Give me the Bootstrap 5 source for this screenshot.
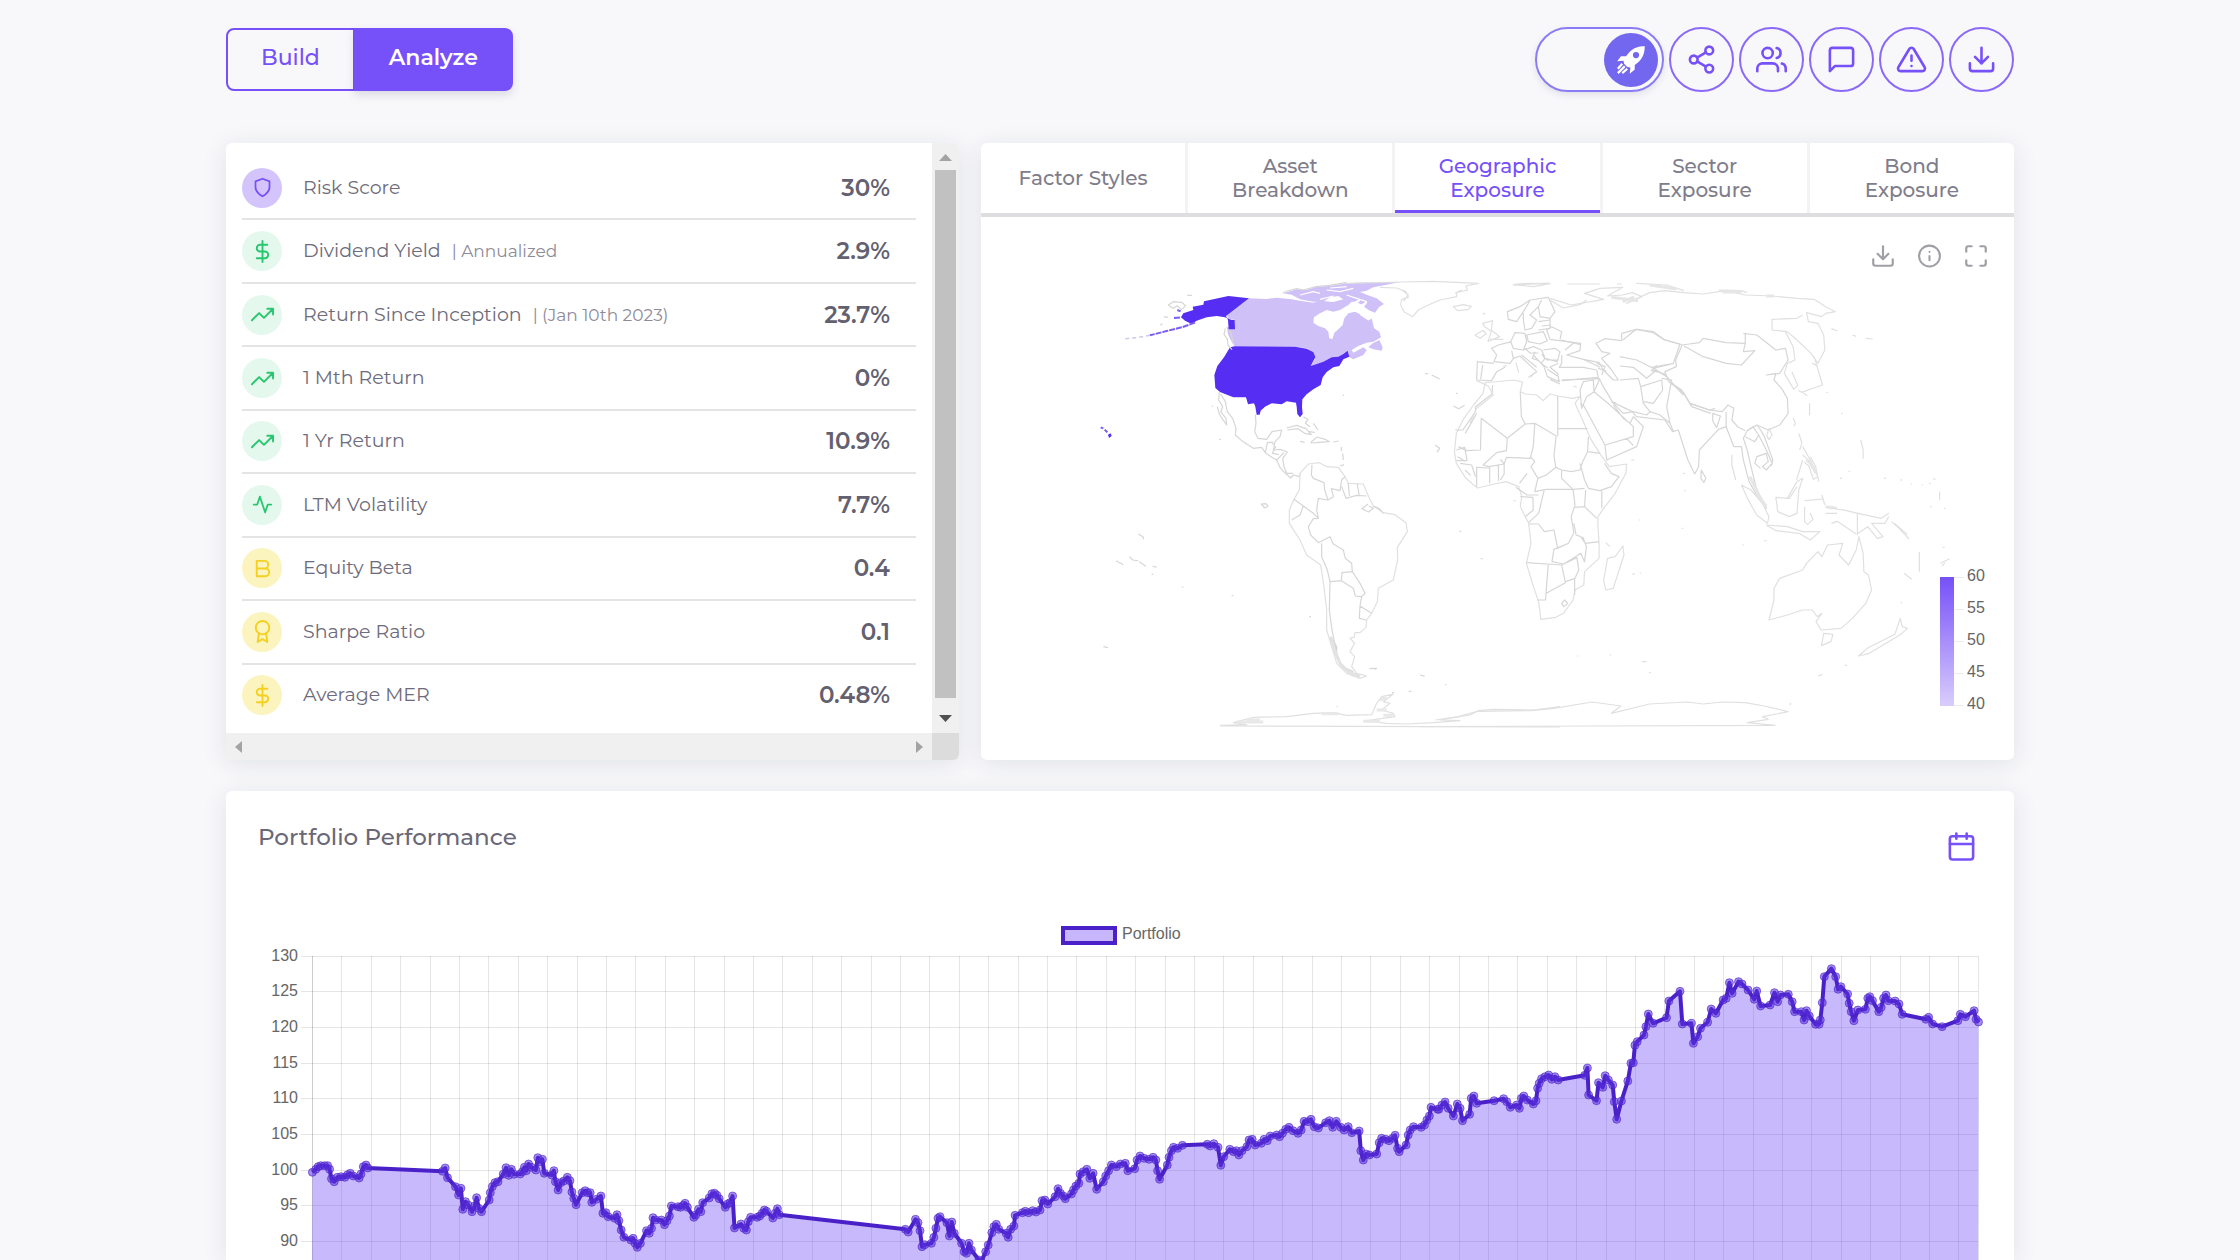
<!DOCTYPE html>
<html lang="en">
<head>
<meta charset="utf-8">
<meta name="viewport" content="width=device-width, initial-scale=1">
<title>Portfolio Analysis</title>
<link href="https://cdn.jsdelivr.net/npm/bootstrap@5.3.0/dist/css/bootstrap.min.css" rel="stylesheet">
<style>
:root{--violet:#7650f8;--ink:#6e6b7b}
body{background:#f8f8fb;color:var(--ink);font-family:Montserrat,Inter,"Open Sans",sans-serif;font-size:19px;line-height:24px}
.shell{max-width:1788px}
.topbar{padding:27px 0 51px}
.actions{gap:5px}
.ico{fill:none;stroke:currentColor;stroke-width:2;stroke-linecap:round;stroke-linejoin:round;display:block}
.mode .btn{font-size:22px;font-weight:500;line-height:24px;height:63px;padding:0 33px 4px;border:2px solid var(--violet);border-radius:8px;color:var(--violet)}
.mode .btn.active{background:var(--violet);color:#fff;font-weight:600;box-shadow:0 4px 8px rgba(60,50,90,.15)}
.round{width:65px;height:65px;border:2px solid #8a69f9;color:var(--violet);background:transparent;padding:0}
.rocket-switch{width:129px;height:65px;border:2px solid #8a7bf6;background:transparent;padding:0 4px;box-shadow:0 3px 6px rgba(60,50,90,.12)}
.knob{width:54px;height:54px;background:#7367f0}
.panels{display:grid;grid-template-columns:733fr 1033fr;gap:22px}
.panel{background:#fff;border-radius:6px;box-shadow:0 4px 24px rgba(34,41,47,.1)}
.stats-grid{display:grid;grid-template-columns:1fr 27px;grid-template-rows:1fr 27px;overflow:hidden}
.stats{padding:14px 16px 7px}
.stat{border-bottom:2px solid #e4e4e6;padding:0 26px 0 0;min-height:56px}
.stat:last-child{border-bottom:0}
.bubble{width:40px;height:40px;margin-right:21px}
.violet{background:#d3c5fb;color:#7650f8}
.green{background:#e5f8ee;color:#28c76f}
.gold{background:#fbf4bf;color:#f5d022}
.hint{font-size:17px;color:#8e8b98;margin-left:11px}
.amount{font-size:23px;font-weight:600;color:#63606f}
.bar-v,.bar-h{background:#f0f0f0}
.bar-v .thumb{background:#c1c1c1;margin:0 3px}
.corner{background:#dcdcdc}
.tabs{border-bottom:4px solid #dedee0}
.tabs .tab{flex:1 1 0;height:70px;padding:0 30px;border:0;border-right:3px solid #f3f3f5;background:none;color:#807d8b;font-size:20px;font-weight:500;line-height:24px}
.tabs .tab:last-child{border-right:0}
.tabs .tab.active{color:var(--violet);box-shadow:inset 0 -3px var(--violet)}
.tools{right:25px;top:26px;gap:21px;color:#a09fa6}
.plain{border:0;background:none;padding:0;color:inherit}
.perf{margin-top:31px}
.perf-head{padding:32px 37px 0 32px}
.perf-head h2{font-size:23px;line-height:28px;font-weight:500;color:#6a6777}
.perf-head .plain{color:var(--violet);margin-top:8px}
.canvas-text{font:16px "Liberation Sans",Arial,sans-serif;fill:#666}
#world path,#world circle{vector-effect:non-scaling-stroke}
.land{fill:none;stroke:#d6d6d6;stroke-width:1.2;stroke-linejoin:round}
.coast{stroke:#e0e0e0}
.us{fill:#562df3}
.ca{fill:#cfc1f8}
</style>
<script src="https://cdn.jsdelivr.net/npm/bootstrap@5.3.0/dist/js/bootstrap.bundle.min.js"></script>
</head>
<body>
<main class="shell vh-100 mx-auto d-flex flex-column">
  <header class="topbar d-flex justify-content-between align-items-center">
    <div class="btn-group mode" role="group" aria-label="Mode">
      <button type="button" class="btn">Build</button>
      <button type="button" class="btn active">Analyze</button>
    </div>
    <div class="actions d-flex">
      <button type="button" role="switch" aria-checked="true" aria-label="Boost" class="rocket-switch rounded-pill d-flex align-items-center justify-content-end">
        <span class="knob rounded-circle d-flex align-items-center justify-content-center">
          <svg width="30" height="30" viewBox="0 0 24 24" fill="#fff"><path fill-rule="evenodd" d="M23 1C18 1 13.500 2.500 10.500 6L8 9 4 9 1 13 6 12.500 6.500 15 9 17.500 11.500 18 11 23 15 19.500 15 16 18 13.500C21.500 10.500 23 6 23 1ZM16 5.500a2.500 2.500 0 1 1 0 5 2.500 2.500 0 0 1 0-5Z"/><path d="M1.500 19L5 15M1.500 22.500L7 17M5 22.500L9 19" stroke="#fff" stroke-width="1.800"/></svg>
        </span>
      </button>
      <button type="button" aria-label="Share" class="round rounded-circle d-flex align-items-center justify-content-center"><svg class="ico" width="31" height="31" viewBox="0 0 24 24"><circle cx="18" cy="5" r="3"/><circle cx="6" cy="12" r="3"/><circle cx="18" cy="19" r="3"/><path d="M8.590 13.510l6.830 3.980M15.410 6.510l-6.820 3.980"/></svg></button>
      <button type="button" aria-label="Users" class="round rounded-circle d-flex align-items-center justify-content-center"><svg class="ico" width="31" height="31" viewBox="0 0 24 24"><path d="M17 21v-2a4 4 0 0 0-4-4H5a4 4 0 0 0-4 4v2"/><circle cx="9" cy="7" r="4"/><path d="M23 21v-2a4 4 0 0 0-3-3.870M16 3.130a4 4 0 0 1 0 7.750"/></svg></button>
      <button type="button" aria-label="Comments" class="round rounded-circle d-flex align-items-center justify-content-center"><svg class="ico" width="31" height="31" viewBox="0 0 24 24"><path d="M21 15a2 2 0 0 1-2 2H7l-4 4V5a2 2 0 0 1 2-2h14a2 2 0 0 1 2 2z"/></svg></button>
      <button type="button" aria-label="Alerts" class="round rounded-circle d-flex align-items-center justify-content-center"><svg class="ico" width="31" height="31" viewBox="0 0 24 24"><path d="M10.290 3.860L1.820 18a2 2 0 0 0 1.710 3h16.940a2 2 0 0 0 1.710-3L13.710 3.860a2 2 0 0 0-3.420 0zM12 9v4M12 17h.01"/></svg></button>
      <button type="button" aria-label="Download" class="round rounded-circle d-flex align-items-center justify-content-center"><svg class="ico" width="31" height="31" viewBox="0 0 24 24"><path d="M21 15v4a2 2 0 0 1-2 2H5a2 2 0 0 1-2-2v-4M7 10l5 5 5-5M12 15V3"/></svg></button>
    </div>
  </header>

  <div class="panels">
    <section class="panel stats-grid">
      <ul class="stats list-unstyled mb-0 d-flex flex-column">
        <li class="stat flex-fill d-flex align-items-center"><span class="bubble violet rounded-circle d-flex align-items-center justify-content-center"><svg class="ico" width="21" height="21" viewBox="0 0 24 24"><path d="M12 22s8-4 8-10V5l-8-3-8 3v7c0 6 8 10 8 10z"/></svg></span><span>Risk Score</span><span class="amount ms-auto">30%</span></li>
        <li class="stat flex-fill d-flex align-items-center"><span class="bubble green rounded-circle d-flex align-items-center justify-content-center"><svg class="ico" width="23" height="23" viewBox="0 0 24 24"><path d="M12 1v22M17 5H9.500a3.500 3.500 0 0 0 0 7h5a3.500 3.500 0 0 1 0 7H6"/></svg></span><span>Dividend Yield</span><span class="hint">| Annualized</span><span class="amount ms-auto">2.9%</span></li>
        <li class="stat flex-fill d-flex align-items-center"><span class="bubble green rounded-circle d-flex align-items-center justify-content-center"><svg class="ico" width="23" height="23" viewBox="0 0 24 24"><path d="M23 6l-9.500 9.500-5-5L1 18M17 6h6v6"/></svg></span><span>Return Since Inception</span><span class="hint">| (Jan 10th 2023)</span><span class="amount ms-auto">23.7%</span></li>
        <li class="stat flex-fill d-flex align-items-center"><span class="bubble green rounded-circle d-flex align-items-center justify-content-center"><svg class="ico" width="23" height="23" viewBox="0 0 24 24"><path d="M23 6l-9.500 9.500-5-5L1 18M17 6h6v6"/></svg></span><span>1 Mth Return</span><span class="amount ms-auto">0%</span></li>
        <li class="stat flex-fill d-flex align-items-center"><span class="bubble green rounded-circle d-flex align-items-center justify-content-center"><svg class="ico" width="23" height="23" viewBox="0 0 24 24"><path d="M23 6l-9.500 9.500-5-5L1 18M17 6h6v6"/></svg></span><span>1 Yr Return</span><span class="amount ms-auto">10.9%</span></li>
        <li class="stat flex-fill d-flex align-items-center"><span class="bubble green rounded-circle d-flex align-items-center justify-content-center"><svg class="ico" width="21" height="21" viewBox="0 0 24 24"><path d="M22 12h-4l-3 9L9 3l-3 9H2"/></svg></span><span>LTM Volatility</span><span class="amount ms-auto">7.7%</span></li>
        <li class="stat flex-fill d-flex align-items-center"><span class="bubble gold rounded-circle d-flex align-items-center justify-content-center"><svg class="ico" width="23" height="23" viewBox="0 0 24 24"><path d="M6 4h8a4 4 0 0 1 0 8H6zM6 12h9a4 4 0 0 1 0 8H6z"/></svg></span><span>Equity Beta</span><span class="amount ms-auto">0.4</span></li>
        <li class="stat flex-fill d-flex align-items-center"><span class="bubble gold rounded-circle d-flex align-items-center justify-content-center"><svg class="ico" width="23" height="23" viewBox="0 0 24 24"><circle cx="12" cy="8" r="7"/><path d="M8.210 13.890L7 23l5-3 5 3-1.210-9.120"/></svg></span><span>Sharpe Ratio</span><span class="amount ms-auto">0.1</span></li>
        <li class="stat flex-fill d-flex align-items-center"><span class="bubble gold rounded-circle d-flex align-items-center justify-content-center"><svg class="ico" width="23" height="23" viewBox="0 0 24 24"><path d="M12 1v22M17 5H9.500a3.500 3.500 0 0 0 0 7h5a3.500 3.500 0 0 1 0 7H6"/></svg></span><span>Average MER</span><span class="amount ms-auto">0.48%</span></li>
      </ul>
      <div class="bar-v d-flex flex-column" aria-hidden="true">
        <svg width="27" height="27" viewBox="0 0 27 27"><path d="M7 18h13l-6.500-7z" fill="#a3a3a3"/></svg>
        <div class="thumb flex-fill"></div>
        <svg width="27" height="35" viewBox="0 0 27 35"><path d="M7 17h13l-6.500 7z" fill="#505050"/></svg>
      </div>
      <div class="bar-h d-flex justify-content-between" aria-hidden="true">
        <svg width="27" height="27" viewBox="0 0 27 27"><path d="M16 8v12l-7-6z" fill="#a3a3a3"/></svg>
        <svg width="27" height="27" viewBox="0 0 27 27"><path d="M11 8v12l7-6z" fill="#a3a3a3"/></svg>
      </div>
      <div class="corner" aria-hidden="true"></div>
    </section>

    <section class="panel position-relative">
      <div class="tabs d-flex" role="tablist">
        <button type="button" role="tab" class="tab">Factor Styles</button>
        <button type="button" role="tab" class="tab">Asset Breakdown</button>
        <button type="button" role="tab" aria-selected="true" class="tab active">Geographic Exposure</button>
        <button type="button" role="tab" class="tab">Sector Exposure</button>
        <button type="button" role="tab" class="tab">Bond Exposure</button>
      </div>
      <div class="position-relative">
        <svg id="world" class="d-block w-100" viewBox="981 217 1033 543" role="img" aria-label="Geographic exposure map">
          <defs>
            <linearGradient id="scale" x1="0" y1="0" x2="0" y2="1"><stop offset="0" stop-color="#7650f8"/><stop offset="1" stop-color="#d9cdfc"/></linearGradient>
          </defs>
          <!-- Americas -->
          <g transform="translate(1100 260) scale(.33333)">
            <path class="ca" d="M447 115L500 117 530 113 575 118 600 122 640 128 660 122 700 126 730 118 760 120 745 135 720 150 700 155 680 150 660 160 642 172 640 188 655 198 675 205 685 215 688 235 697 238 703 218 715 208 728 195 733 175 745 160 765 155 785 165 805 180 815 175 822 205 838 215 843 232 820 245 800 248 775 258 755 270 760 278 790 262 800 270 790 285 760 298 748 292 744 272 730 282 715 290 695 292 670 305 632 318 644 300 640 275 620 265 585 260 404 259 395 245 385 225 380 200 400 205 405 180 385 176 380 165Z"/>
            <path class="ca" d="M550 100L590 88 620 90 650 80 690 78 740 70 800 67 900 66 860 74 820 82 800 92 780 96 800 104 830 115 852 132 838 140 825 158 805 150 790 138 770 125 740 125 715 108 690 112 670 125 640 125 600 118 575 104ZM818 250L838 240 848 262 845 272 820 268 805 262Z"/>
            <path d="M600 105L640 95 660 100M680 90L720 95 760 85M660 118L700 108M740 105L770 115 800 125M780 148L800 160M690 84L740 80" fill="none" stroke="#fff" stroke-width="1.200"/>
            <path d="M735 165L765 128 780 120M768 140L790 138 800 125M785 165L805 178 815 172 800 160Z" fill="#fff" stroke="#fff" stroke-width="2"/>
            <path class="us" d="M404 259L585 260 620 266 640 276 646 292 632 318 670 305 695 292 715 290 730 282 743 272 748 290 730 298 718 318 700 322 680 336 668 352 662 375 640 388 620 403 607 418 606 440 608 462 600 472 592 462 590 440 588 428 560 424 545 433 515 430 495 440 482 452 479 464 470 464 466 440 462 430 444 433 438 412 400 412 375 402 360 396 346 384 343 345 352 318 372 292 390 262Z"/>
            <path class="us" d="M447 115L385 108 340 118 312 124 310 134 278 140 280 150 250 160 243 172 255 182 275 192 290 182 320 172 350 168 375 172 395 180 404 180 405 208 386 208 384 180 378 168ZM24 524l8-4 3 8-8 6z"/>
            <path d="M285 188L245 202 200 213 150 226M2 502l8 3M14 509l8 8M222 174l22-2M232 150l10 4" fill="none" stroke="#7b5cf5" stroke-width="2" stroke-dasharray="6 1"/>
            <path d="M150 226L110 233 75 236" fill="none" stroke="#cfc8ee" stroke-width="1.500" stroke-dasharray="4 3"/>
            <path class="land" d="M376 205l-4 18 10 14 2 18 12 14M390 210l6 22 4 20M205 135l15-10 25 2 12 10-12 12-14-12-12 8zM262 106l14 0M192 170l12 2M180 195l8-4M548 100l14-7 28-7 20 4 38-10 40-4 52-9"/>
            <path class="land coast" d="M740 70L900 66 1000 64 1135 70 1098 78 1102 90 1070 98 1070 110 1020 120 985 135 955 150 938 170 912 155 902 135 905 118 925 112 918 95 890 84 840 82M905 90l20 14-14 20M1060 140l30-6 24 5-10 10-32 3zM1085 90l-20 10M1240 74l40-4 70 1-50 9z"/>
            <path class="land" d="M358 396L356 420 368 440 362 455 378 475 380 495 368 478 358 462 352 440M362 402L376 425 382 455 398 475 408 505 406 525 425 542 460 565 485 562 496 578 515 592 530 600 540 622 556 640 572 654 580 645 598 650 600 640M466 464L468 490 464 515 474 535 500 538 516 515 545 510 540 530 525 545 520 570 540 568 562 576 548 595 552 620 560 640 580 640M496 578l6-30 18-2M515 548l12 12-10 20 20 4M530 600l22-22"/>
            <path class="land" d="M560 504l30-8 28 10 16 18-20-4-20-14-32 4M600 544l14 3M634 545l18-14 26 8 10 6-30 2-24 2zM700 546l16-3M724 560v14M728 580l2 20M720 618l12-4M610 470l14 8-8 12 14 10M640 490l14 20M628 515l16 2"/>
            <path class="land coast" d="M600 640L625 612 658 608 680 620 715 622 735 650 745 670 790 672 806 710 820 738 850 758 885 764 918 788 922 815 892 862 893 900 880 960 835 985 832 1025 815 1060 800 1080 798 1102 780 1118 765 1118 762 1132 750 1134 764 1150 750 1175 764 1190 755 1220 770 1240 800 1248 780 1255 740 1240 710 1210 695 1160 680 1110 680 1050 672 980 662 915 620 885 600 840 568 790 568 750 582 718 598 690Z"/>
            <path class="land" d="M636 614L634 645 640 655 672 668 674 690 684 720 655 715 650 750 655 775 640 776 625 800 632 825 655 848 690 830 700 852 730 870 736 895 755 910 757 935 726 938 724 962 690 965 682 930 665 890 665 850M582 718L610 738 600 765 575 780M610 738L640 760 655 775M684 720L700 710 694 686 720 692 725 660 735 650M725 680L738 715 770 706 800 708M745 670l3 38M772 672l6 36M806 738l14 6-14 12-20-10 18-14M820 738l18 8 12 14M690 965L688 1050 696 1110 710 1180 725 1220 760 1235M724 962L760 985 766 1008 785 1010 795 1000 780 970 757 935M785 1010L780 1038 815 1060M780 1038L778 1075 798 1080M700 1140l10 20 0 22M705 1180l20 40 30 22"/>
            <path d="M692 1130L705 1175 720 1210 745 1235 780 1250" fill="none" stroke="#e2e2e2" stroke-width="3"/>
            <path class="land" d="M484 732l14-1 6 8-10 5zM115 822l14 8 2 8M48 902l22 12M88 890l10 10 16 2M118 905l20 14M158 918l12 4M10 1160l14 3M975 340l10 2M995 345l24 12M1060 438l16 8 18-10M1005 555l14 10-8 12M808 1226l22-1-6 4M960 1245l14 4M728 406h4M335 438h5M358 538h5M1068 400h5M628 1070h5M395 1007h5M245 981h5M155 943h5M1078 814h5M1142 896h5M1035 1274h4M926 1294h8M710 1340h3M876 1298h6"/>
            <path class="land coast" d="M360 1398L1380 1401M360 1396L440 1394 400 1388 460 1372 560 1370 640 1360 700 1358 740 1366 815 1364 830 1330 845 1310 880 1302 850 1325 870 1330 845 1350 880 1360 885 1370 800 1382 860 1390 920 1392 1000 1388 1080 1382 1020 1380 1110 1365 1135 1352 1180 1348 1300 1350 1380 1340"/>
            <path d="M410 1386h80M440 1380l40 0M840 1320l20-8M830 1350h30M850 1366h30M790 1384h50M665 1361h50" fill="none" stroke="#e8e8e8" stroke-width="3"/>
          </g>
          <!-- Africa, Asia and Oceania -->
          <g transform="translate(1420 260) scale(.38267 .33333)">
            <path class="land coast" d="M170 368L190 366 245 360 268 366 262 395 275 402 305 405 322 422 340 402 360 408 400 415 418 410 405 430 425 480 445 535 470 580 485 605 495 620 540 612 538 640 510 700 480 745 465 770 465 800 468 850 468 895 430 935 428 975 405 990 400 1020 375 1060 355 1072 316 1078 310 1025 298 985 278 910 290 850 284 790 262 740 266 710 258 680 225 665 195 672 150 684 120 655 95 610 90 575 95 520 115 475 140 435 165 400ZM530 858L533 885 505 985 485 990 480 960 490 895 510 890ZM485 848l12 12M555 943l6-2M574 939h4"/>
            <path class="land" d="M190 375L188 402 145 440 145 455 112 510 92 510M160 475L158 570 122 572 100 560M160 475L228 535 226 572 200 578 165 615 180 620 220 612 210 598M228 535L275 492 300 490 296 560 288 595 226 592 220 612M262 395L265 470 275 492M300 490L356 528 350 585 355 622 330 645 308 655 290 620 300 605 288 590M360 408V528M362 506H438M440 530L438 575 425 605 418 630 395 635 370 630 355 622M418 610L430 660 440 685 470 692 500 680 520 650 500 640 482 610M440 575L470 580M370 630L370 655 400 688 430 685M308 655L300 695 330 688 400 688M250 682L280 705 310 705M262 710L295 712 296 750 275 770M325 688L310 760 284 788M400 688L405 735 395 770 402 818 388 850 360 865 350 810 325 815 310 792 284 792M405 742L430 740 462 775M433 690L430 740M475 690V745M402 790L408 825 420 830 432 850 468 845M388 850L350 868 345 905 375 912 400 895 420 880 430 905 435 860 425 830M278 908L370 915M335 915L328 1020 306 1020M330 1000L380 968 370 915 410 893 415 930 405 955 380 965M404 955V1005M370 1030l8-10 8 10-10 10zM95 570l22-8 6 40-28 0M98 590l20 14M105 610l30 5 10 35M118 630l14 16M148 620v60M182 620v50M205 615v48M150 622l30 2M220 612l0 30-10 18M280 640l-20 30M118 520l30-60"/>
            <path class="land" d="M845 220L880 225 930 270 955 265 962 300 940 340 905 345 930 340 925 360 945 385 960 415 962 460 940 495 910 510 880 495 855 512 845 535 855 570 865 620 880 690 900 730 905 745 885 715 860 665 845 600 840 560 820 560 800 500 780 508 730 570 728 620 718 642 700 600 675 510 660 515 640 480 565 470 555 455 500 425"/>
            <path class="land" d="M685 255L730 248 740 235 800 248 850 250 845 275 875 272 840 315 800 310 740 290 690 258M850 250V222M530 240L565 208 610 215 640 240 685 255 668 300 670 320 640 335 650 365 690 400 705 430 755 450 790 455 805 435 820 445 815 480 830 500 850 512M705 430L710 440 760 460M765 460l20 8-10 35-10-20zM800 455l0 45M855 512L870 500 885 525 875 545 850 530M885 525L905 570 920 610 905 630 895 620 910 605 905 580 880 590 875 610 890 625M880 495L890 510 900 530 922 600 918 618M735 630l12 25-5 12-8-12z"/>
            <path class="land coast" d="M912 505l8 20-8 14-6-12zM975 475l6 14-4 10M990 520l8 30-6 20M1000 560l20 40 20 50-12 8-12-40-12-12M1000 585l16 16M1008 600l24 24M1020 590l14 30 8 45M1000 600l-16 60M840 675L865 690 895 730 912 770 908 790 880 765 860 725ZM905 795L960 800 1000 815 1045 815 1020 840 990 820 930 812ZM930 712L960 715 985 665 1000 655 990 690 985 760 965 770 935 755ZM930 712L965 715 985 680M1005 740l0 45 8 8 14-15-8-20M1005 722l50-5M1050 705l8 30M1060 740l40 10M1070 738l20 6M1100 748L1145 760 1205 775 1225 760M1143 760V825M1145 820L1170 800 1195 835 1210 830 1180 790 1215 790 1225 770M1075 790l15-6 50 38M1060 760l30 0M1232 785l20 20 26 32M1240 790l34 34M815 585l0 30 10 45M1305 875v60M1265 940l20 18M1360 910l24-14M1364 918l8-10"/>
            <path class="land coast" d="M1147 830L1158 880 1160 935 1172 945 1180 990 1165 1030 1130 1075 1100 1105 1048 1110 1035 1085 1050 1060 1038 1070 1025 1050 1000 1050 960 1065 912 1080 925 1020 925 985 940 955 1000 930 1010 910 1040 875 1050 890 1065 855 1105 850 1095 885 1120 915 1140 870ZM1055 1120l24 3-5 22-25 12zM1255 1075l5 25 14 5-20 20-80 55-28 8 25-25 70-40z"/>
            <path class="land coast" d="M340 115L395 135 480 118 430 100 470 85 530 82 490 108 530 105 555 98 580 110 540 130 600 98 640 92 690 98 740 102 800 92 850 105 920 108 985 115 1030 118 1060 140 1085 155 1060 160 1050 170 1010 158 1015 185 1040 190 1055 225 1058 270 1040 310 1022 280 985 240 960 215 920 210 920 178 985 175 1000 165M955 215L975 260 980 300 960 310M960 310l-8 30 25 48 10-12-15-40M1030 290l22 85-30 12-25 10-8-6M998 395l14 12M1025 310l15 8M245 75l95-6M385 72h85M515 72h12M565 70l80 5 45 17M430 100l30-10M780 90l60 2 14 6M1075 206l16 7M1130 225l10 4M1165 235l18 2"/>
            <path d="M500 112l70 10M530 125l30-14M600 75l70 12M790 96h50M905 108h20M880 700l25 40M862 650l22 50M1015 600l20 40M1060 740l20 5" fill="none" stroke="#e6e6e6" stroke-width="3"/>
            <path class="land coast" d="M1062 397h4M1100 460h4M1152 540l6 30v26M1120 634h4M1098 655h5M1213 655h5M1255 660h6M1282 672h4M1310 675h4M1340 657h8M1330 670h4M1358 695v24M1333 740h4M1370 745h4M1018 430v36M552 600h8M688 640h5M690 692h4M572 780h4M684 805h4M842 855h5M900 842h5M580 1205h12M495 1185h5M410 1188h4M598 1238h5M1110 1216h6M1040 1248l12-5M1256 1028h4M245 722h5M104 815h4M160 896h4M164 162h6M968 1328v8M1366 862h5"/>
            <path class="land coast" d="M0 1400L928 1396 855 1388 910 1378 895 1370 962 1355 900 1338 850 1328 790 1326 740 1332 700 1326 600 1332 500 1360 525 1338 450 1326 350 1345 290 1352 150 1354 100 1370 40 1380"/>
          </g>
          <!-- Europe and the Middle East -->
          <g transform="translate(1470 280) scale(.33333)">
            <path class="land" d="M455 160L500 148 550 158 580 178 630 192 610 250 550 265 590 290 640 345M455 160V182L405 176 378 190 395 215 420 220 395 235 425 270 445 300 430 300 400 270 388 248 340 238 290 225 330 212 332 190 240 178 230 150 245 140 275 155 270 178M450 230L500 240 560 270 530 295 490 262 450 258M450 300L505 295 512 320 520 370 540 395 530 405 490 395 460 400 430 370 400 320 388 296 275 300M512 320L575 300 578 330 550 370 520 365M575 295L605 300 590 380 600 430M540 395L570 405 600 430 610 455M605 310L635 330 660 370 720 390 735 385M390 295L372 335 350 350 335 385 330 330 340 305 370 300 372 335M372 335L420 375 490 440 490 470 405 495 340 375 330 372M405 495L410 540 500 500 520 440 490 410 480 430 460 415 430 375M470 475l20 22M425 365l14 5"/>
            <path class="land" d="M150 80L180 60 235 52 255 95 240 115 210 110 205 80 215 60M180 62L160 95 140 125 115 118 112 95 150 80M205 80L180 105 200 120 185 145 165 150 160 120 160 100M240 115L240 145 205 150M205 125l35-5M215 138l28-3M170 165L220 155 232 182 210 192 175 185ZM165 160L135 158 122 185 130 205 160 210 170 185ZM125 185L85 195 65 205 80 225 72 245 120 250 130 235 125 212M72 250L22 245 20 300 65 302 80 275 105 262M38 255L32 298M130 235L150 228 200 275 178 290M155 225L200 262M160 210L190 200 215 210 225 235 262 245 270 215 255 205 220 210M190 225L222 260 232 290 268 305 262 280 240 262 265 250M195 215l-8 20 22 8M215 222l10 14-12 14 20 14M228 240l36 0M240 298l30 14M165 205l15 14 25 0M232 268l30 20M275 225L275 250 268 262 340 262 380 270 385 292 275 302M272 180l60 14M310 190l-25 20M380 250l25 10-10 25M385 265l24 8M340 238l50 24M545 262l55-10M548 270l40 14M560 256l-16 16 30 6"/>
            <path class="land coast" d="M38 130l30-8-4 28 25 20-35 14 10-30-20-14zM15 165l25-14 8 10-18 14zM138 248l8 30M175 292l14-6M100 260l10-3M310 318l10 4M40 100h5M20 302L55 318 70 345 20 385 0 430M240 60l40 24 50-10 20-14M60 178l40 0"/>
          </g>
          <!-- colour scale -->
          <rect x="1940" y="577" width="14" height="129" fill="url(#scale)"/>
          <path d="M1954 577.500h10M1954 609.500h10M1954 641.500h10M1954 673.500h10M1954 705.500h10" stroke="#ececec" stroke-width="1"/>
          <g class="canvas-text">
            <text x="1967" y="581">60</text><text x="1967" y="613">55</text><text x="1967" y="645">50</text><text x="1967" y="677">45</text><text x="1967" y="709">40</text>
          </g>
        </svg>
        <div class="tools position-absolute d-flex align-items-center">
          <button type="button" class="plain" aria-label="Download chart"><svg class="ico" width="26" height="26" viewBox="0 0 24 24"><path d="M21 15v4a2 2 0 0 1-2 2H5a2 2 0 0 1-2-2v-4M7 10l5 5 5-5M12 15V3"/></svg></button>
          <button type="button" class="plain" aria-label="Information"><svg class="ico" width="25" height="26" viewBox="0 0 24 24"><circle cx="12" cy="12" r="10"/><path d="M12 16v-4M12 8h.01"/></svg></button>
          <button type="button" class="plain" aria-label="Full screen"><svg class="ico" width="26" height="26" viewBox="0 0 24 24"><path d="M8 3H5a2 2 0 0 0-2 2v3M21 8V5a2 2 0 0 0-2-2h-3M16 21h3a2 2 0 0 0 2-2v-3M3 16v3a2 2 0 0 0 2 2h3"/></svg></button>
        </div>
      </div>
    </section>
  </div>

  <section class="panel perf flex-fill d-flex flex-column rounded-bottom-0 overflow-hidden">
    <div class="perf-head d-flex justify-content-between">
      <h2 class="mb-0">Portfolio Performance</h2>
      <button type="button" class="plain" aria-label="Choose dates"><svg class="ico" width="31" height="31" viewBox="0 0 24 24"><rect x="3" y="4" width="18" height="18" rx="2"/><path d="M16 2v4M8 2v4M3 10h18"/></svg></button>
    </div>
    <svg id="perf" class="d-block w-100 flex-shrink-0" viewBox="226 862 1788 398" role="img" aria-label="Portfolio value over time">
      <g id="grid" stroke="#000" stroke-opacity=".1"></g>
      <path id="area" fill="#7650f8" fill-opacity=".4"/>
      <path id="line" fill="none" stroke="#4a21c8" stroke-width="4" stroke-linejoin="round"/>
      <g id="dots" fill="#5a30dd" fill-opacity=".55" stroke="#4a21c8" stroke-opacity=".6"></g>
      <rect x="1063" y="928" width="52" height="15" fill="#c8b6fc" stroke="#4a21c8" stroke-width="4"/>
      <g class="canvas-text" id="labels"><text x="1122" y="939">Portfolio</text></g>
    </svg>
  </section>
</main>
<script>
// Each series chunk: horizontal origin, horizontal resolution, then x,y samples (vertical resolution 3 per pixel).
const chunks = [
 [250, 2.613, "163,817 172,808 178,800 185,797 195,797 203,797 208,808 213,836 220,845 228,832 238,830 248,832 255,824 262,820 270,828 285,834 290,822 296,800 303,795 308,804 503,814 510,804 516,833 537,860 545,885 551,865 556,928 563,905 570,915 580,935 587,918 592,893 598,925 605,935 625,900 628,878 633,860 640,848 648,845 662,822 669,803 676,826 683,808 690,823 706,822 712,815 717,802 722,812 728,792 735,802 747,810 752,773 757,785 764,778 769,820 788,825 794,812 798,845 805,870 812,848 820,843 829,832 836,842 841,876 846,895 852,914 868,878 876,872 882,878 889,878 893,907 905,898 917,888 922,940 930,938 936,950 953,955 959,944 964,962 970,990 977,1012 995,1020 1001,1015 1006,1030 1012,1042 1020,1030 1036,992 1043,1000 1049,985 1053,953 1060,960 1075,960 1083,974 1090,962 1096,948 1101,918 1118,920 1125,922 1132,916 1137,910 1143,922 1160,952 1165,945 1172,928 1178,935 1183,908 1200,894 1207,881 1214,880 1220,886 1226,896 1242,922 1248,912 1254,908 1261,888 1266,984 1283,972 1290,985 1297,990 1302,965 1308,952 1325,952 1332,948 1338,940 1344,930 1350,934 1366,954 1372,940 1378,926 1383,944"],
 [800, 2.45, "258,988 265,996 283,958 289,968 294,992 299,1040 306,1034 322,1030 328,1012 333,985 338,955 343,950 360,968 366,1008 372,966 378,1000 396,1030 402,1055 408,1060 414,1030 420,1050 438,1080 444,1085 455,1055 461,1035 470,998 475,980 481,973 487,988 505,1000 510,1012 516,988 524,978 527,946 545,938 552,934 560,938 570,932 578,936 588,930 593,902 600,900 607,912 625,890 632,866 638,880 645,888 650,896 665,882 670,870 676,858 683,850 686,822 694,815 703,808 710,835 718,820 727,868 743,845 749,828 756,812 763,795 775,800 785,792 797,790 803,812 820,806 826,780 833,768 843,775 855,778 865,772 872,780 876,812 881,838 900,795 904,772 910,752 915,742 925,745 937,736 998,733 1005,738 1014,731 1024,742 1031,796 1038,770 1053,748 1062,755 1069,752 1075,765 1083,752 1095,740 1100,720 1108,718 1115,735 1130,730 1137,718 1145,722 1152,708 1168,705 1175,710 1182,700 1190,688 1198,682 1208,692 1220,700 1228,690 1235,664 1245,665 1252,658 1260,680 1270,684 1288,668 1297,662 1305,682 1314,664 1325,682 1333,690 1343,680 1352,698 1370,693 1374,752 1380,780 1387,762 1395,765 1413,762 1419,728 1425,715 1435,718 1443,722 1452,715 1458,706 1464,745 1468,755 1485,735 1490,705 1495,690 1503,680 1522,682 1530,675 1536,660 1542,648 1546,622 1562,628"],
 [1400, 2.529, "98,628 106,615 114,606 122,625 135,648 145,612 152,625 158,662 176,643 180,595 187,588 194,610 238,602 262,596 270,605 279,622 295,615 302,625 307,595 313,588 322,600 337,612 344,602 348,565 352,550 358,536 367,530 376,525 384,538 392,530 400,540 467,526 474,504 477,585 497,602 502,548 513,562 519,527 527,540 538,555 542,605 548,658 560,603 576,543 584,490 590,488 594,436 600,425 617,405 622,380 628,342 640,370 674,353 680,303 708,274 714,372 737,370 742,430 753,410 760,385 778,367 787,327 799,340 817,300 825,295 833,248 840,280 856,245 865,252 880,270 896,298 902,273 912,318 936,315 947,278 955,305 962,285 982,283 992,305 998,335 1015,335 1022,360 1028,332 1035,348 1051,373 1060,373 1063,360 1068,308 1073,230 1091,206 1102,230 1108,268 1115,260 1132,282 1136,310 1141,335 1148,362 1158,330 1177,328 1183,295 1188,290 1195,302 1211,335 1217,322 1223,295 1229,285 1235,302 1252,303 1262,312 1270,343 1330,358 1337,352 1347,372 1371,380 1411,362 1417,343 1430,350 1452,332 1457,358 1463,366"]
];
const pts = chunks.flatMap(([x0, k, s]) => s.split(" ").map(p => {
  const [x, y] = p.split(",").map(Number);
  return [+(x0 + x / k).toFixed(1), +(900 + y / 3).toFixed(1)];
}));
const byId = id => document.getElementById(id);
let grid = "", labels = "";
for (let v = 130, y = 956.5; v >= 90; v -= 5, y += 35.7) {
  const r = Math.round(y) - .5;
  grid += `<path d="M301 ${r}H1978"/>`;
  labels += `<text x="298" y="${Math.round(y) + 4}" text-anchor="end">${v}</text>`;
}
for (let i = 0; i < 57; i++) grid += `<path d="M${Math.round(312 + i * 29.4) + .5} 956V1260"/>`;
grid += '<path d="M312.5 956V1260M1978.5 956V1260"/>';
byId("grid").innerHTML = grid;
byId("labels").innerHTML += labels;
const d = "M" + pts.map(p => p.join(" ")).join("L");
byId("line").setAttribute("d", d);
byId("area").setAttribute("d", d + "L1978 1300L312 1300Z");
byId("dots").innerHTML = pts.map(p => `<circle cx="${p[0]}" cy="${p[1]}" r="4"/>`).join("");
</script>
</body>
</html>
